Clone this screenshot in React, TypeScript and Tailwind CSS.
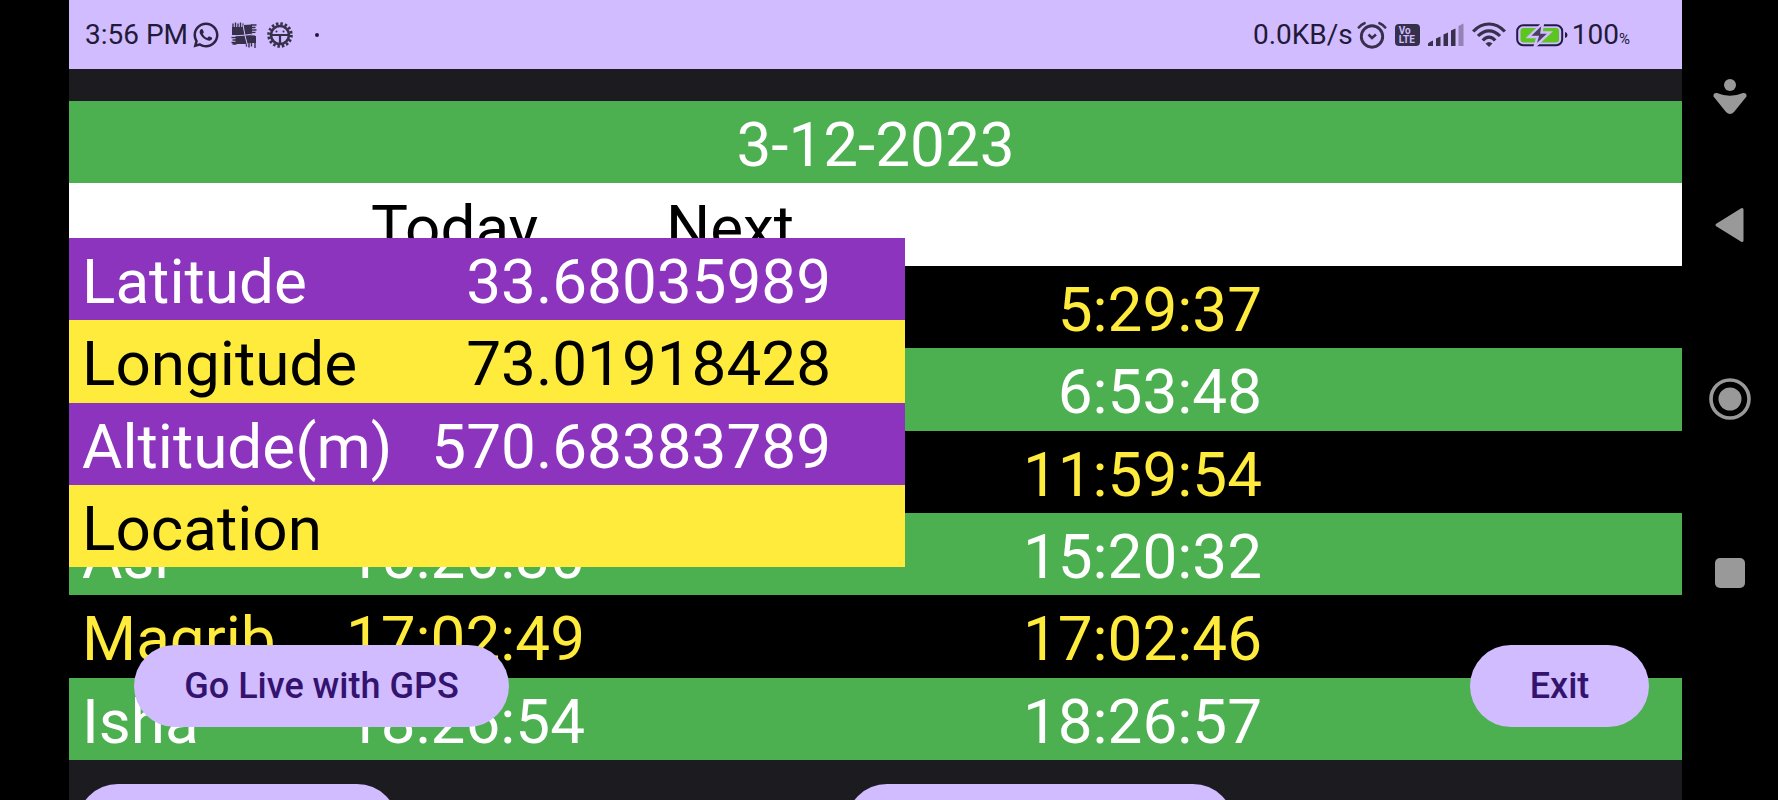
import { RiWhatsappLine } from "react-icons/ri";

const PuzzleIcon = () => (
  <svg viewBox="0 0 26 26" className="h-[26px] w-[26px]" fill="#37304b" aria-hidden="true">
    <path d="M1 5h11.500l1 8.500L1 13z" />
    <path d="M12.500 3L21 2.500v10.500h-8z" />
    <path d="M4.500 13.500L14 13l2.500 9H4.500z" />
    <path d="M13.500 13L25 13.500V21H16z" />
    {/* Teeth on each outer side */}
    <path
      d="M2 6V1.500M4.500 6V.500M7 6V1.500M9.500 6V.500M12 6V1.500M20 3h5.500M20 5.500h4.500M20 8h5.500M20 10.500h4.500M6 15.500H.500M6 18h-4.500M6 20.500H.500M5.500 22h-4M15.500 20v4.500M18 20v5.500M20.500 20v4.500M24 20v6"
      stroke="#37304b"
      strokeWidth="1.400"
    />
    <path d="M12 2.500l2 11 2.500 10M1 14l12.500-.800 12-1.700" fill="none" stroke="#d1bcff" strokeWidth="1" />
  </svg>
);

const GearIcon = () => (
  <svg viewBox="0 0 26 26" className="h-[26px] w-[26px]" fill="none" stroke="#37304b" aria-hidden="true">
    <circle cx="13" cy="13" r="11.300" strokeWidth="3" strokeDasharray="2.500 1.938" />
    <circle cx="13" cy="13" r="9" strokeWidth="2.600" />
    <path d="M4 13h18" strokeWidth="2" />
    <path d="M13 13v9" strokeWidth="2.200" />
    <path d="M9.500 9.500v.1M16.500 9.500v.1" strokeWidth="2" strokeLinecap="round" />
  </svg>
);

const AlarmIcon = () => (
  <svg viewBox="0 0 30 28" className="h-[28px] w-[30px]" fill="none" stroke="#37304b" strokeLinecap="round" aria-hidden="true">
    <circle cx="15" cy="15.500" r="10.700" strokeWidth="2.900" />
    <path d="M1.800 6.500Q4 3.500 7.500 2.200M28.200 6.500Q26 3.500 22.500 2.200" strokeWidth="2.600" />
    <path d="M11.500 13.500l3.500 3.500 4-3.500" strokeWidth="2.600" strokeLinecap="butt" />
  </svg>
);

const SignalIcon = () => (
  <svg viewBox="0 0 36 24" className="h-[24px] w-[36px]" fill="#37304b" aria-hidden="true">
    <path d="M0 20.500q2-2 5-3V23H0zM8 15.500l4.500-2V23H8zM15.500 11.500l4.500-2V23h-4.500zM23 7.500l4.500-2V23H23z" />
    <path d="M30.500 3l5-2.500V23h-5z" fill="#9482b4" />
  </svg>
);

const WifiIcon = () => (
  <svg viewBox="0 0 34 25" className="h-[25px] w-[34px]" fill="none" stroke="#37304b" strokeWidth="3.200" aria-hidden="true">
    <path d="M1.200 9.500Q8 2 17 2t15.800 7.500" />
    <path d="M6 14Q11 8.800 17 8.800T28 14" />
    <path d="M10.800 18.500Q13.500 15.200 17 15.200t6.200 3.300" />
    <path d="M13.500 21.500Q17 18.500 20.500 21.500L17 25z" fill="#37304b" stroke="none" />
  </svg>
);

const BatteryIcon = () => (
  <svg viewBox="0 0 52 24" className="h-[24px] w-[52px]" aria-hidden="true">
    <rect x="1.200" y="2.200" width="45" height="20" rx="6" fill="none" stroke="#211a45" strokeWidth="2" />
    <rect x="4.500" y="5" width="38.500" height="14.500" rx="3" fill="#5cc51f" />
    <path d="M49 9q2.500.5 2.500 3T49 15z" fill="#211a45" />
    <path d="M27 0L12.500 14h9L18.500 24 34 9.500h-8.500z" fill="#4b3d63" stroke="#d2bdff" strokeWidth="2.400" />
  </svg>
);

const StatusBar = () => (
  <header className="flex h-[69px] shrink-0 items-center bg-[#d1bcff] pr-[52px] pl-4 text-[28px] leading-8 text-[#211a38]">
    <span>3:56 PM</span>
    <div className="ml-[3px] flex items-center gap-2.5">
      <RiWhatsappLine className="h-[30px] w-[30px] text-[#2b2440]" />
      <PuzzleIcon />
      <GearIcon />
      <span className="ml-3 size-1 rounded-full bg-[#211a38]" />
    </div>
    <div className="ml-auto flex items-center gap-2">
      <div className="flex items-center gap-1">
        <span>0.0KB/s</span>
        <AlarmIcon />
      </div>
      <span className="flex h-[22px] w-[25px] flex-col justify-center rounded-sm bg-[#37304b] pl-1 text-[10px] leading-[9px] font-bold text-[#d1bcff]">
        <span>Vo</span>
        <span>LTE</span>
      </span>
      <SignalIcon />
      <WifiIcon />
      <div className="ml-0.5 flex items-center gap-1">
        <BatteryIcon />
        <div className="flex items-baseline">
          <span>100</span>
          <small className="text-[15px] leading-4">%</small>
        </div>
      </div>
    </div>
  </header>
);

const prayers = [
  { name: "", today: "", next: "5:29:37" },
  { name: "", today: "", next: "6:53:48" },
  { name: "", today: "", next: "11:59:54" },
  { name: "Asr", today: "15:20:30", next: "15:20:32" },
  { name: "Magrib", today: "17:02:49", next: "17:02:46" },
  { name: "Isha", today: "18:26:54", next: "18:26:57" },
];

const PrayerTable = () => (
  <table className="w-full table-fixed border-collapse text-[62px] leading-[76px]">
    <caption className="h-[82px] bg-[#4caf50] pt-1.5 text-center text-white">3-12-2023</caption>
    <colgroup>
      <col className="w-[516px]" />
      <col className="w-[677px]" />
      <col />
    </colgroup>
    <thead>
      <tr className="h-[83px] bg-white text-black">
        <th className="p-0 pt-1.5 pr-[47px] text-right font-normal">Today</th>
        <th className="p-0 pt-1.5 pl-[81px] text-left font-normal">Next</th>
        <td className="p-0" />
      </tr>
    </thead>
    <tbody className="h-[494px]">
      {prayers.map((prayer) => (
        <tr key={prayer.next} className="odd:bg-black odd:text-[#ffeb3b] even:bg-[#4caf50] even:text-white">
          <td className="p-0 pt-1.5 pl-[13px]">
            <div className="flex justify-between">
              <span>{prayer.name}</span>
              <span>{prayer.today}</span>
            </div>
          </td>
          <td className="p-0 pt-1.5 text-right">{prayer.next}</td>
          <td className="p-0" />
        </tr>
      ))}
    </tbody>
  </table>
);

const position = [
  { label: "Latitude", value: "33.68035989" },
  { label: "Longitude", value: "73.01918428" },
  { label: "Altitude(m)", value: "570.68383789" },
  { label: "Location", value: "" },
];

const PositionTable = () => (
  <table className="absolute top-[169px] left-0 h-[329px] w-[836px] border-collapse text-[62px] leading-[76px]">
    <tbody>
      {position.map((row) => (
        <tr key={row.label} className="odd:bg-[#8c34bd] odd:text-white even:bg-[#ffeb3b] even:text-black">
          <th scope="row" className="p-0 pt-1.5 pl-[13px] text-left font-normal">
            {row.label}
          </th>
          <td className="p-0 pt-1.5 pr-[74px] text-right">{row.value}</td>
        </tr>
      ))}
    </tbody>
  </table>
);

const pill = "h-[82px] rounded-full bg-[#d1bcff] text-[36px] leading-10 font-medium text-[#34136f]";

const NavRail = () => (
  <nav className="flex w-24 shrink-0 flex-col items-center gap-[126px] bg-black pt-[72px] text-[#999999]" aria-label="System">
    <button className="-mb-[45px] size-12" aria-label="Accessibility">
      <svg viewBox="0 0 48 48" fill="currentColor">
        <circle cx="24" cy="13" r="6" />
        <path d="M11 21Q24 26.500 37 21q4-.5 3.500 3.500L28 40q-4 4-8 0L7.500 24.500Q7 20.500 11 21z" />
      </svg>
    </button>
    <button className="size-12" aria-label="Back">
      <svg viewBox="0 0 48 48" fill="currentColor" stroke="currentColor" strokeWidth="3" strokeLinejoin="round">
        <path d="M11 24L36 8.500v31z" />
      </svg>
    </button>
    <button className="size-12" aria-label="Home">
      <svg viewBox="0 0 48 48">
        <circle cx="24" cy="24" r="19" fill="none" stroke="currentColor" strokeWidth="3.600" />
        <circle cx="24" cy="24" r="11.500" fill="currentColor" />
      </svg>
    </button>
    <button className="size-12" aria-label="Recent apps">
      <svg viewBox="0 0 48 48" fill="currentColor">
        <rect x="9" y="9" width="30" height="30" rx="5" />
      </svg>
    </button>
  </nav>
);

const App = () => {
  return (
    <div className="flex h-screen overflow-hidden bg-black pl-[69px] font-[Roboto,sans-serif]">
      <div className="flex min-w-0 flex-1 flex-col bg-[#1c1b20]">
        <StatusBar />
        <main className="relative pt-8">
          <PrayerTable />
          <PositionTable />

          {/* Floating actions */}
          <div className="absolute top-[576px] right-[33px] left-[65px] flex justify-between">
            <button className={`${pill} w-[375px]`}>Go Live with GPS</button>
            <button className={`${pill} w-[179px]`}>Exit</button>
          </div>

          <div className="flex gap-[448px] px-2 pt-6">
            <button className={`${pill} w-[321px]`} />
            <button className={`${pill} w-[388px]`} />
          </div>
        </main>
      </div>
      <NavRail />
    </div>
  );
};

export default App;
